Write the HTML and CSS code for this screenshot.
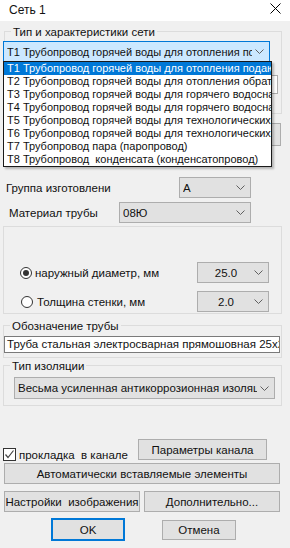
FILE: index.html
```
<!DOCTYPE html>
<html>

<head>
    <meta charset="utf-8">
    <title>Сеть 1</title>
    <link rel="stylesheet" href="styles.css">
</head>

<body>
    <div class="window">
        <div class="titlebar">
            <span class="title">Сеть 1</span>
            <svg class="close" width="11" height="11" viewBox="0 0 11 11"><path d="M0.5 0.5L10.5 10.5M10.5 0.5L0.5 10.5" stroke="#000" stroke-width="1" fill="none"/></svg>
        </div>

        <!-- тип сети -->
        <div class="group g-net">
            <div class="legend">Тип и характеристики сети</div>
            <div class="combo focus c-net">
                <span class="val">Т1 Трубопровод горячей воды для отопления подающий</span>
                <svg class="chev" width="9" height="5" viewBox="0 0 9 5"><path d="M0.5 0.5L4.5 4.5L8.5 0.5" fill="none" stroke="#606060"/></svg>
            </div>
            <div class="field-hidden"></div>
        </div>
        <div class="btn btn-hidden"></div>

        <div class="row r-group">
            <span class="lbl l-group">Группа изготовлени</span>
            <div class="combo c-group">
                <span class="val">А</span>
                <svg class="chev" width="9" height="5" viewBox="0 0 9 5"><path d="M0.5 0.5L4.5 4.5L8.5 0.5" fill="none" stroke="#606060"/></svg>
            </div>
        </div>
        <div class="row r-mat">
            <span class="lbl l-mat">Материал трубы</span>
            <div class="combo c-mat">
                <span class="val">08Ю</span>
                <svg class="chev" width="9" height="5" viewBox="0 0 9 5"><path d="M0.5 0.5L4.5 4.5L8.5 0.5" fill="none" stroke="#606060"/></svg>
            </div>
        </div>

        <!-- размеры -->
        <div class="group g-size">
            <div class="row r-diam">
                <span class="radio checked"></span>
                <span class="rlbl">наружный диаметр, мм</span>
                <div class="combo c-num">
                    <span class="val center">25.0</span>
                    <svg class="chev" width="9" height="5" viewBox="0 0 9 5"><path d="M0.5 0.5L4.5 4.5L8.5 0.5" fill="none" stroke="#606060"/></svg>
                </div>
            </div>
            <div class="row r-wall">
                <span class="radio"></span>
                <span class="rlbl">Толщина стенки, мм</span>
                <div class="combo c-num">
                    <span class="val center">2.0</span>
                    <svg class="chev" width="9" height="5" viewBox="0 0 9 5"><path d="M0.5 0.5L4.5 4.5L8.5 0.5" fill="none" stroke="#606060"/></svg>
                </div>
            </div>
        </div>

        <div class="group g-name">
            <div class="legend">Обозначение трубы</div>
            <div class="textbox">Труба стальная электросварная прямошовная 25х2.0</div>
        </div>

        <div class="group g-iso">
            <div class="legend">Тип изоляции</div>
            <div class="combo c-iso">
                <span class="val">Весьма усиленная антикоррозионная изоляция</span>
                <svg class="chev" width="9" height="5" viewBox="0 0 9 5"><path d="M0.5 0.5L4.5 4.5L8.5 0.5" fill="none" stroke="#606060"/></svg>
            </div>
        </div>

        <div class="row r-chan">
            <label class="check">
                <span class="box"><svg width="11" height="11" viewBox="0 0 11 11"><path d="M1.5 5.5L4 8.5L9.5 1.5" fill="none" stroke="#444" stroke-width="1.2"/></svg></span>
                <span class="pre">прокладка  в канале</span>
            </label>
            <div class="btn b-chan">Параметры канала</div>
        </div>
        <div class="btn b-auto">Автоматически вставляемые элементы</div>
        <div class="row r-opts">
            <div class="btn b-half pre">Настройки  изображения</div>
            <div class="btn b-half">Дополнительно...</div>
        </div>
        <div class="row r-ok">
            <div class="btn b-ok">OK</div>
            <div class="btn b-cancel">Отмена</div>
        </div>

        <!-- раскрытый список -->
        <ul class="droplist">
            <li class="current">Т1 Трубопровод горячей воды для отопления подающий</li>
            <li>Т2 Трубопровод горячей воды для отопления обратный</li>
            <li>Т3 Трубопровод горячей воды для горячего водоснабжения</li>
            <li>Т4 Трубопровод горячей воды для горячего водоснабжения</li>
            <li>Т5 Трубопровод горячей воды для технологических нужд</li>
            <li>Т6 Трубопровод горячей воды для технологических...</li>
            <li>Т7 Трубопровод пара (паропровод)</li>
            <li class="pre">Т8 Трубопровод  конденсата (конденсатопровод)</li>
        </ul>
    </div>
</body>

</html>
```

FILE: styles.css
```
*{
    padding: 0;
    margin: 0;
    box-sizing: border-box;
}
ul{
    list-style: none;
}
html,body{
    width: 290px;
    height: 548px;
    overflow: hidden;
}
body{
    background-color: #f0f0f0;
    font-family: "Liberation Sans", Arial, sans-serif;
    font-size: 11.5px;
    color: #111;
}
.window{
    position: relative;
    width: 290px;
    height: 548px;
}
.titlebar{
    height: 21px;
    background-color: #fff;
    display: flex;
    justify-content: space-between;
    padding: 0 9px 0 9px;
}
.title{
    font-size: 12px;
    line-height: 21px;
}
.close{
    margin-top: 3px;
}

/* рамки групп */
.group{
    border: 1px solid #dcdcdc;
}
.legend{
    display: table;
    margin: -6px 0 0 6px;
    padding: 0 2px;
    line-height: 13px;
    background-color: #f0f0f0;
}
.g-net{
    margin: 10px 0 0 4px;
    width: 278px;
    height: 83px;
}
.g-size{
    margin: 3px 0 0 3px;
    width: 279px;
    height: 88px;
}
.g-name{
    margin: 11px 0 0 3px;
    width: 279px;
    height: 33px;
}
.g-iso{
    margin: 7px 0 0 3px;
    width: 279px;
    height: 41px;
}

/* выпадающие поля */
.combo{
    display: flex;
    align-items: center;
    height: 21px;
    border: 1px solid #adadad;
    background-color: #e1e1e1;
    padding: 0 5px 0 3px;
}
.combo .val{
    flex: 1;
    overflow: hidden;
    white-space: nowrap;
}
.combo .val.center{
    text-align: center;
}
.combo .chev{
    flex: none;
    margin-left: 3px;
}
.combo.focus{
    background-color: #cce8ff;
    border-color: #0078d7;
    font-size: 11px;
}
.c-net{
    margin: 2px 0 0 -2px;
    width: 267px;
}
.field-hidden{
    margin: 13px 0 0 96px;
    width: 177px;
    height: 19px;
    border: 1px solid #adadad;
    background-color: #fff;
}
.c-group{
    margin-left: auto;
    width: 72px;
}
.c-mat{
    margin-left: auto;
    width: 132px;
}
.c-num{
    margin-left: auto;
    width: 72px;
}
.c-iso{
    margin: 4px 0 0 10px;
    width: 261px;
    height: 22px;
}

/* строки */
.row{
    display: flex;
    align-items: center;
}
.r-group{
    margin-top: 31px;
    width: 251px;
    padding-left: 6px;
}
.r-mat{
    margin-top: 4px;
    width: 251px;
    padding-left: 9px;
}
.r-diam{
    margin-top: 35px;
    width: 265px;
    padding-left: 16px;
}
.r-wall{
    margin-top: 8px;
    width: 265px;
    padding-left: 17px;
}
.radio{
    width: 12px;
    height: 12px;
    border: 1px solid #333;
    border-radius: 50%;
    background-color: #fff;
    display: flex;
    align-items: center;
    justify-content: center;
}
.radio.checked::after{
    content: "";
    width: 6px;
    height: 6px;
    border-radius: 50%;
    background-color: #333;
}
.rlbl{
    margin-left: 4px;
}
.r-diam .rlbl{
    margin-left: 3px;
}
.textbox{
    margin: 3px 0 0 0;
    width: 276px;
    height: 17px;
    border: 1px solid #7a7a7a;
    background-color: #fff;
    padding-left: 2px;
    line-height: 15px;
    white-space: nowrap;
    overflow: hidden;
}

/* кнопки */
.btn{
    display: flex;
    align-items: center;
    justify-content: center;
    border: 1px solid #adadad;
    background-color: #e1e1e1;
    white-space: nowrap;
}
.btn-hidden{
    margin: 9px 0 0 180px;
    width: 101px;
    height: 23px;
}
.r-chan{
    margin-top: 33px;
    height: 21px;
    align-items: flex-start;
}
.check{
    display: flex;
    align-items: center;
    width: 138px;
    padding-left: 3px;
    margin-top: 9px;
}
.check .box{
    width: 13px;
    height: 13px;
    border: 1px solid #333;
    background-color: #fff;
    margin-right: 3px;
}
.check .box svg{
    display: block;
}
.b-chan{
    width: 129px;
    height: 21px;
}
.b-auto{
    margin: 3px 0 0 4px;
    width: 276px;
    height: 21px;
}
.r-opts{
    margin: 7px 0 0 4px;
    gap: 4px;
}
.b-half{
    width: 136px;
    height: 21px;
}
.r-ok{
    margin: 6px 0 0 51px;
    align-items: flex-start;
}
.b-ok{
    width: 74px;
    height: 23px;
    border: 2px solid #0078d7;
}
.b-cancel{
    margin: 2px 0 0 37px;
    width: 74px;
    height: 20px;
}

/* список */
.droplist{
    position: absolute;
    left: 3px;
    top: 61px;
    width: 269px;
    border: 1px solid #1a1a1a;
    background-color: #fff;
    box-shadow: 2px 2px 2px rgba(0, 0, 0, 0.25);
    font-size: 11px;
}
.droplist li{
    height: 13px;
    line-height: 13px;
    padding-left: 3px;
    white-space: nowrap;
    overflow: hidden;
}
.droplist li.current{
    background-color: #0078d7;
    color: #fff;
}

/* двойные пробелы как в оригинале */
.pre,
.btn.pre,
.droplist li.pre{
    white-space: pre;
}
```
